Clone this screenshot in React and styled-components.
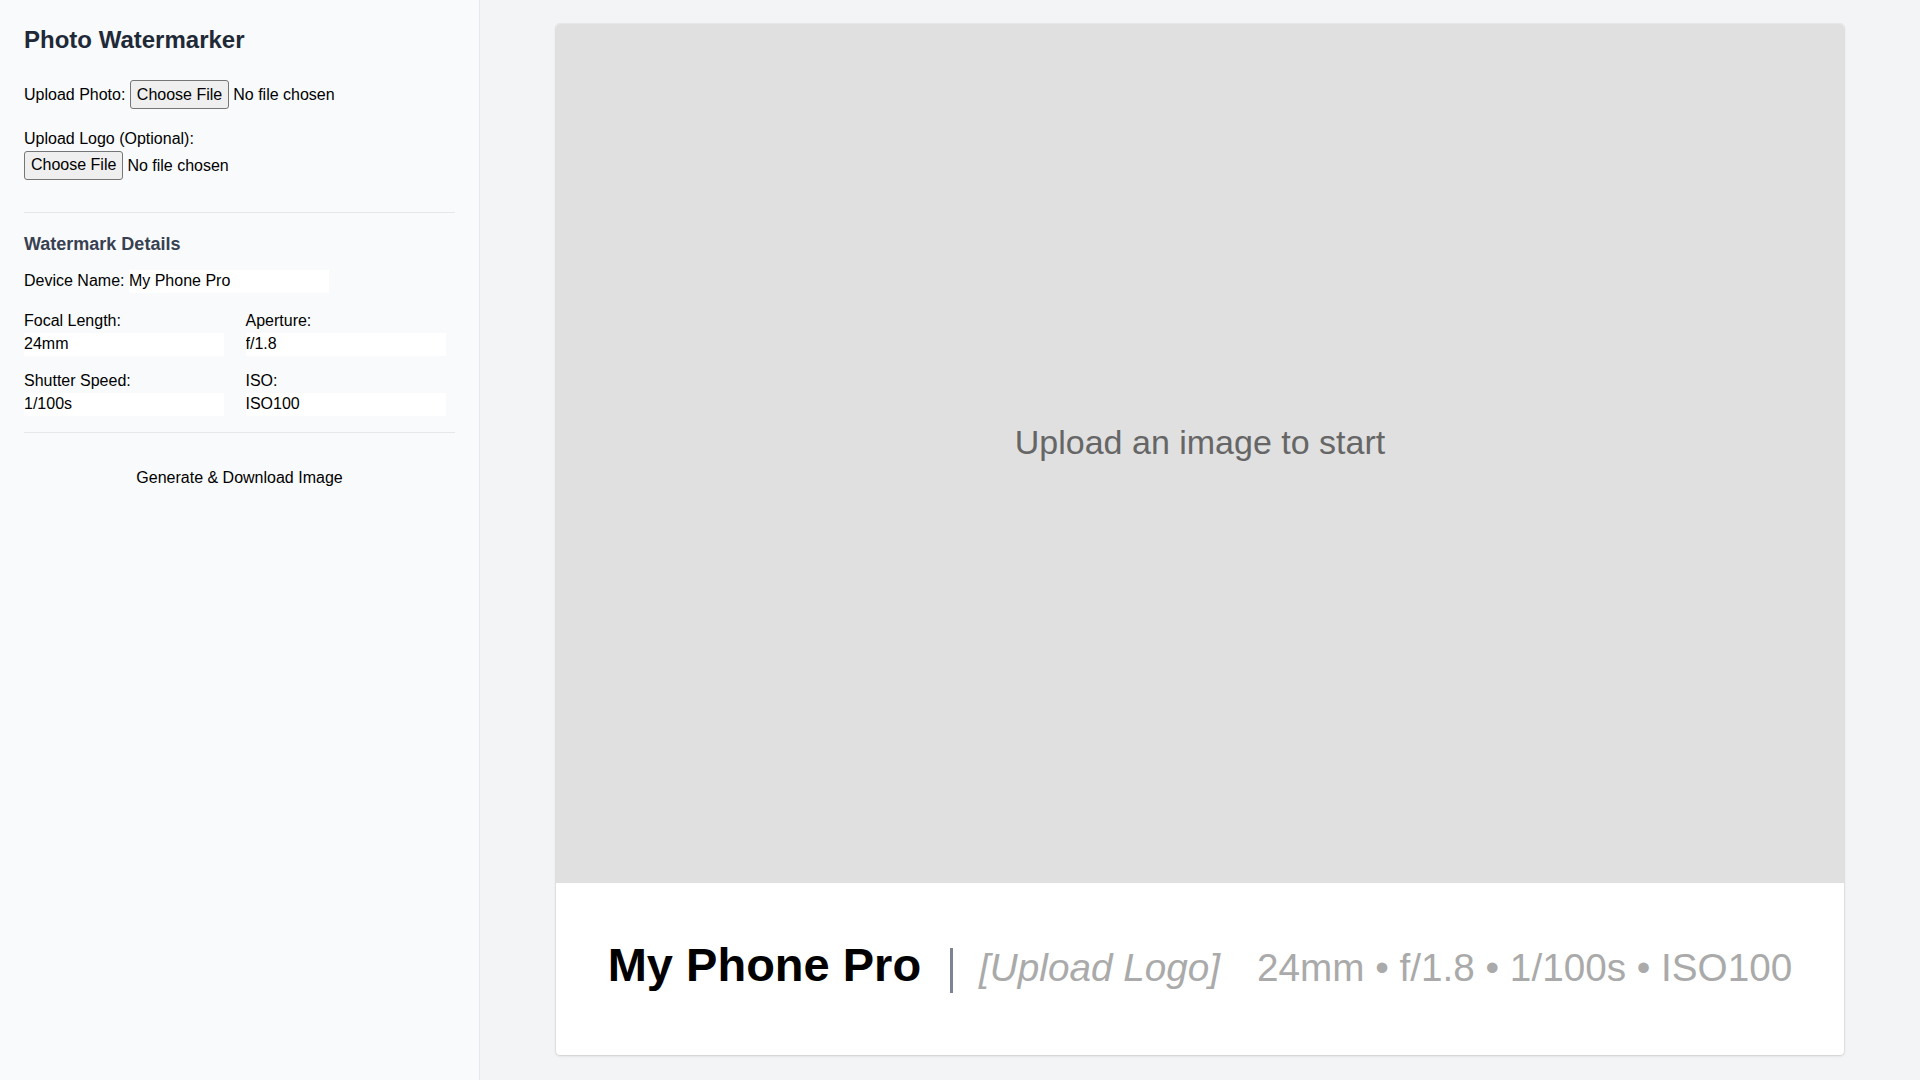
import styled, { createGlobalStyle } from "styled-components";

const GlobalStyle = createGlobalStyle`
    * { box-sizing: border-box; }
    html, body { margin: 0; padding: 0; }
    body {
        font-family: "Liberation Sans", Arial, sans-serif;
        font-size: 16px;
        color: #000;
        background: #f3f4f6;
    }
`

const Layout = styled.div`
    display: flex;
    width: 100vw;
    height: 100vh;
    overflow: hidden;
`

const Sidebar = styled.aside`
    width: 480px;
    flex-shrink: 0;
    padding: 24px;
    background: #f9fafb;
    border-right: 1px solid #e5e7eb;
`

const Title = styled.h1`
    margin: 0 0 24px;
    font-size: 24px;
    line-height: 32px;
    font-weight: 700;
    color: #1f2937;
`

const UploadRow = styled.div`
    margin-bottom: ${(p) => p.$mb || 0}px;
    line-height: 18px;
`

const FileInput = styled.input`
    font: inherit;
    font-size: 16px;

    &::file-selector-button {
        font: inherit;
        height: 29px;
        padding: 0 6px;
        margin-right: 4px;
        border: 1px solid #767676;
        border-radius: 3px;
        background: #efefef;
        color: #000;
    }
`

const BlockLabel = styled.div`
    margin-bottom: 3px;
`

const Divider = styled.hr`
    border: none;
    border-top: 1px solid #e5e7eb;
    margin: ${(p) => p.$m};
`

const SubTitle = styled.h3`
    margin: 0 0 15px;
    font-size: 18px;
    line-height: 22px;
    font-weight: 700;
    color: #374151;
`

const InlineField = styled.label`
    display: flex;
    align-items: center;
    margin-bottom: 19px;
`

const TextInput = styled.input`
    font: inherit;
    width: 200px;
    height: 23px;
    padding: 0;
    border: none;
    outline: none;
    background: #fff;
    color: #000;
`

const Grid = styled.div`
    display: grid;
    grid-template-columns: 1fr 1fr;
    column-gap: 12px;
    row-gap: 16px;
`

const Field = styled.label`
    display: flex;
    flex-direction: column;
    gap: 3px;
    line-height: 18px;
`

const GenerateButton = styled.button`
    display: block;
    width: 100%;
    margin-top: 25px;
    padding: 11px 0;
    border: none;
    background: transparent;
    font: inherit;
    font-size: 16px;
    color: #000;
    cursor: pointer;
`

const Main = styled.main`
    flex: 1;
    display: flex;
    justify-content: center;
    align-items: flex-start;
    padding: 24px;
    background: #f3f4f6;
`

const Card = styled.div`
    width: 1288px;
    height: 1031px;
    display: flex;
    flex-direction: column;
    background: #fff;
    border-radius: 4px;
    overflow: hidden;
    box-shadow: 0 1px 3px rgba(0, 0, 0, 0.12), 0 0 0 1px rgba(0, 0, 0, 0.04);
`

const Preview = styled.div`
    height: 859px;
    display: flex;
    align-items: center;
    justify-content: center;
    padding-bottom: 24px;
    background: #e0e0e0;
`

const Placeholder = styled.span`
    font-size: 34px;
    line-height: 1;
    color: #666;
`

const WatermarkBar = styled.div`
    flex: 1;
    display: flex;
    justify-content: center;
    align-items: center;
    padding-bottom: 11px;
`

const WatermarkLine = styled.div`
    display: flex;
    align-items: baseline;
    white-space: nowrap;
`

const DeviceText = styled.span`
    font-size: 47px;
    font-weight: 700;
    color: #000;
`

const Separator = styled.span`
    display: inline-block;
    width: 3px;
    height: 45px;
    margin: 0 26px 0 29px;
    background: #7c8394;
    transform: translateY(12px);
`

const LogoText = styled.span`
    font-size: 38.7px;
    font-style: italic;
    color: #aaa;
`

const ExifText = styled.span`
    margin-left: 37px;
    font-size: 38.7px;
    color: #aaa;
`

const fields = [
    { label: "Focal Length:", value: "24mm" },
    { label: "Aperture:", value: "f/1.8" },
    { label: "Shutter Speed:", value: "1/100s" },
    { label: "ISO:", value: "ISO100" },
]

export default function App() {
    return <>
        <GlobalStyle />
        <Layout>
            <Sidebar>
                <Title>Photo Watermarker</Title>

                <UploadRow $mb={20.5}>
                    Upload Photo: <FileInput type="file" accept="image/*" />
                </UploadRow>

                <UploadRow>
                    <BlockLabel>Upload Logo (Optional):</BlockLabel>
                    <FileInput type="file" accept="image/*" />
                </UploadRow>

                <Divider $m="32px 0 20px" />

                <SubTitle>Watermark Details</SubTitle>

                <InlineField>
                    Device Name:&nbsp;<TextInput type="text" defaultValue="My Phone Pro" />
                </InlineField>

                <Grid>
                    {fields.map((f) => (
                        <Field key={f.label}>
                            {f.label}
                            <TextInput type="text" defaultValue={f.value} />
                        </Field>
                    ))}
                </Grid>

                <Divider $m="16px 0 0" />

                <GenerateButton type="button">Generate &amp; Download Image</GenerateButton>
            </Sidebar>

            <Main>
                <Card>
                    <Preview>
                        <Placeholder>Upload an image to start</Placeholder>
                    </Preview>
                    <WatermarkBar>
                        <WatermarkLine>
                            <DeviceText>My Phone Pro</DeviceText>
                            <Separator />
                            <LogoText>[Upload Logo]</LogoText>
                            <ExifText>24mm • f/1.8 • 1/100s • ISO100</ExifText>
                        </WatermarkLine>
                    </WatermarkBar>
                </Card>
            </Main>
        </Layout>
    </>
}
